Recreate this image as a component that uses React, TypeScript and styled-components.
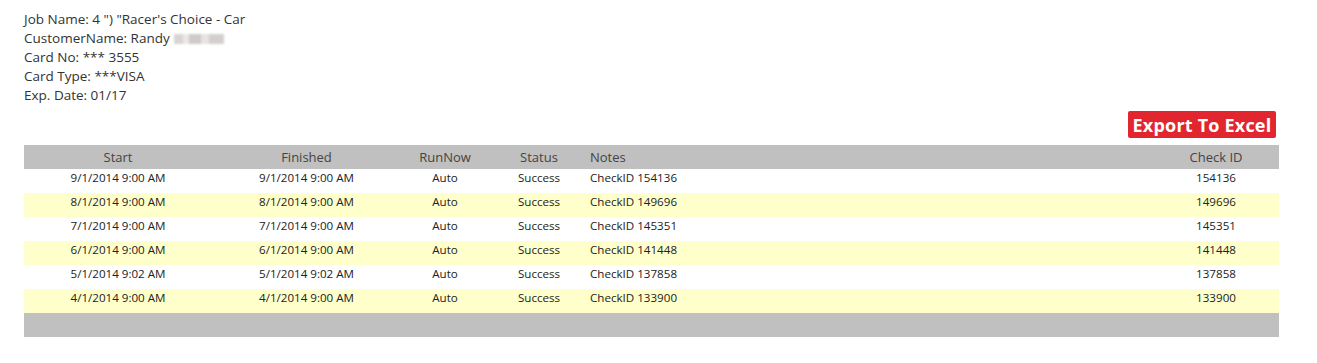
import React from "react";
import styled, { createGlobalStyle } from "styled-components";

const GlobalStyle = createGlobalStyle`
	body {
		margin: 0;
		background: #fff;
		font-family: "Open Sans", "Noto Sans", sans-serif;
	}
`;

const Page = styled.div`
	padding: 10px 39px 0 24px;
`;

const Info = styled.div`
	font-size: 13.5px;
	line-height: 19px;
	color: #333;
`;

const Blur = styled.span`
	display: inline-block;
	width: 50px;
	height: 10px;
	margin-left: 4px;
	vertical-align: -1px;
	background: linear-gradient(90deg, #d8d4d4 0 18%, #ece8e8 18% 30%, #cfcaca 30% 55%, #e6e3e3 55% 70%, #d3cfcf 70% 100%);
	filter: blur(1px);
`;

const Toolbar = styled.div`
	display: flex;
	justify-content: flex-end;
	padding: 6px 2px 7px 0;
`;

const ExportButton = styled.button`
	background: #e2262f;
	color: #fff;
	border: none;
	border-radius: 2px;
	height: 27px;
	width: 148px;
	padding: 0;
	font-family: "Open Sans", "Noto Sans", sans-serif;
	font-weight: 700;
	font-size: 18px;
	letter-spacing: 0.2px;
	cursor: pointer;
`;

const Table = styled.table`
	width: 1254px;
	border-collapse: collapse;
	table-layout: fixed;
	font-size: 11.6px;
`;

const HeadCell = styled.th<{ $w: number; $left?: boolean }>`
	width: ${(p) => p.$w}px;
	height: 24px;
	padding: 0 0 0 ${(p) => (p.$left ? 1 : 0)}px;
	background: #c0c0c0;
	color: #444;
	font-weight: 400;
	font-size: 13px;
	text-align: ${(p) => (p.$left ? "left" : "center")};
`;

const Row = styled.tr<{ $alt: boolean }>`
	background: ${(p) => (p.$alt ? "#ffffcc" : "#fff")};
`;

const Cell = styled.td<{ $left?: boolean }>`
	height: 23px;
	padding: 1px 0 0 ${(p) => (p.$left ? 1 : 0)}px;
	vertical-align: top;
	line-height: 16px;
	color: #222;
	text-align: ${(p) => (p.$left ? "left" : "center")};
	white-space: nowrap;
`;

const FooterCell = styled.td`
	height: 24px;
	padding: 0;
	background: #c0c0c0;
`;

const rows = [
	["9/1/2014 9:00 AM", "154136"],
	["8/1/2014 9:00 AM", "149696"],
	["7/1/2014 9:00 AM", "145351"],
	["6/1/2014 9:00 AM", "141448"],
	["5/1/2014 9:02 AM", "137858"],
	["4/1/2014 9:00 AM", "133900"],
];

export default function App() {
	return (
		<Page>
			<GlobalStyle />
			<Info>
				<div>Job Name: 4 ") "Racer's Choice - Car</div>
				<div>
					CustomerName: Randy<Blur />
				</div>
				<div>Card No: *** 3555</div>
				<div>Card Type: ***VISA</div>
				<div>Exp. Date: 01/17</div>
			</Info>
			<Toolbar>
				<ExportButton>Export To Excel</ExportButton>
			</Toolbar>
			<Table>
				<thead>
					<tr>
						<HeadCell $w={188}>Start</HeadCell>
						<HeadCell $w={189}>Finished</HeadCell>
						<HeadCell $w={88}>RunNow</HeadCell>
						<HeadCell $w={100}>Status</HeadCell>
						<HeadCell $w={563} $left>
							Notes
						</HeadCell>
						<HeadCell $w={126}>Check ID</HeadCell>
					</tr>
				</thead>
				<tbody>
					{rows.map(([date, id], i) => (
						<Row key={id} $alt={i % 2 === 1}>
							<Cell>{date}</Cell>
							<Cell>{date}</Cell>
							<Cell>Auto</Cell>
							<Cell>Success</Cell>
							<Cell $left>CheckID {id}</Cell>
							<Cell>{id}</Cell>
						</Row>
					))}
				</tbody>
				<tfoot>
					<tr>
						<FooterCell colSpan={6} />
					</tr>
				</tfoot>
			</Table>
		</Page>
	);
}
